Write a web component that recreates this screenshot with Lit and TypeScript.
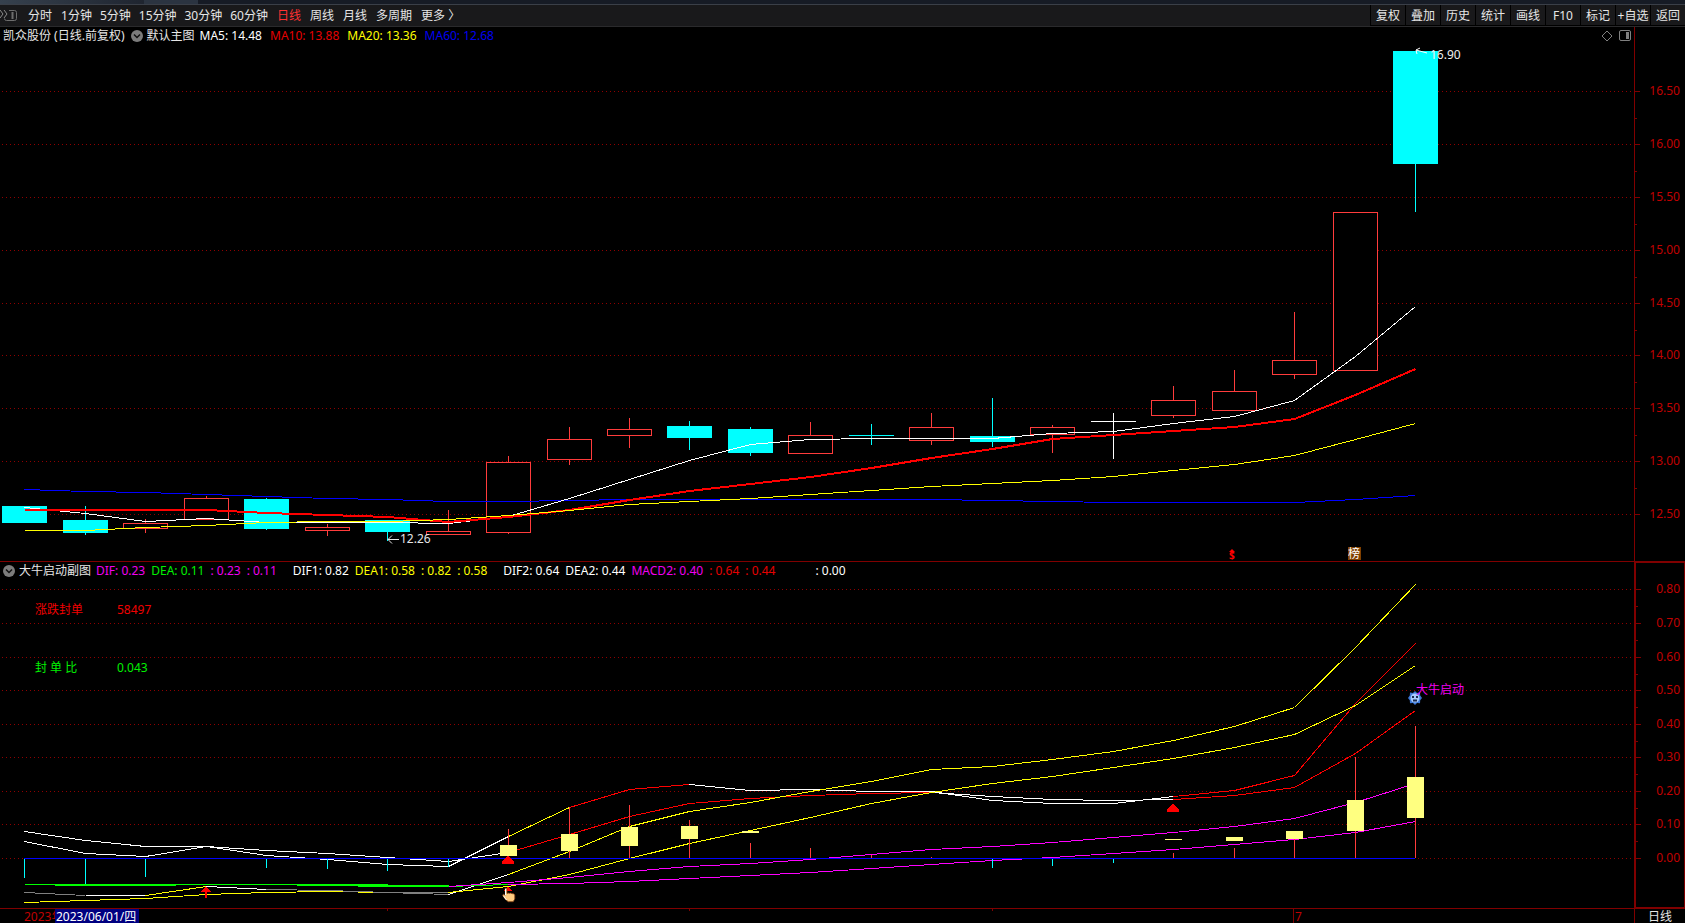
import { LitElement, html, svg, css } from "lit";
import { customElement, state } from "lit/decorators.js";

type Run = { color: string; from: number; y: number[]; w?: number };
type Candle = { kind: "up" | "down" | "flat"; o: number; c: number; hi: number; lo: number };
type Size = { w: number; h: number };

const WHITE = "#ffffff";
const YELLOW = "#ffff00";
const RED = "#ff0000";
const MAGENTA = "#ff00ff";
const BLUE = "#0000ff";
const GRAY = "#808080";
const CYAN = "#00ffff";
const CANDLE_RED = "#ff3c3c";

/* Vertical extents of the drawing areas, in chart rows. */
const PRICE = { top: 45, height: 516 };
const PRICE_AXIS = { top: 27, height: 534 };
const INDICATOR = { top: 580, height: 328 };
const INDICATOR_AXIS = { top: 562, height: 346 };
const ZERO = 858;

const candles: Candle[] = [
  ["down", 506, 523, 506, 523], ["down", 520, 533, 506, 535], ["up", 523, 528, 519, 533],
  ["up", 498, 519, 496, 519], ["down", 499, 529, 498, 530], ["up", 527, 530, 524, 536],
  ["down", 520, 532, 520, 541], ["up", 531, 534, 510, 534], ["up", 462, 532, 456, 534],
  ["up", 439, 459, 427, 465], ["up", 429, 435, 418, 448], ["down", 426, 438, 421, 450],
  ["down", 429, 453, 427, 456], ["up", 435, 453, 422, 453], ["down", 435, 436, 424, 445],
  ["up", 427, 440, 413, 445], ["down", 436, 442, 398, 447], ["up", 427, 434, 425, 453],
  ["flat", 421, 422, 413, 459], ["up", 400, 415, 386, 418], ["up", 391, 410, 370, 410],
  ["up", 360, 374, 312, 379], ["up", 212, 370, 212, 370], ["down", 51, 164, 51, 212],
].map(([kind, o, c, hi, lo]) => ({ kind, o, c, hi, lo }) as Candle);

const priceRuns: Run[] = [
  { color: BLUE, from: 0, y: [489, 491, 492, 494, 496, 498, 499, 501, 501, 500, 499, 499, 499, 499, 499, 499, 500, 501, 502, 502, 502, 502, 499, 495] },
  { color: WHITE, from: 0, y: [507, 513, 521, 518, 522, 522, 522, 523, 516, 498, 479, 460, 444, 439, 438, 438, 438, 433, 431, 423, 416, 400, 356, 306] },
  { color: RED, w: 2, from: 0, y: [510, 510, 510, 510, 513, 515, 517, 522, 517, 510, 500, 491, 484, 477, 468, 458, 449, 439, 435, 431, 427, 419, 395, 369] },
  { color: YELLOW, from: 0, y: [530, 530, 527, 525, 522, 521, 521, 519, 515, 510, 504, 501, 498, 494, 490, 486, 483, 480, 476, 470, 464, 455, 439, 423] },
];

const indicatorRuns: Run[] = [
  { color: WHITE, from: 0, y: [831, 840, 846, 846, 850, 853, 857, 861, 852] },
  { color: RED, from: 8, y: [852, 834, 816, 803, 798, 795, 793, 792] },
  { color: WHITE, from: 15, y: [792, 796, 799, 800, 799] },
  { color: RED, from: 19, y: [799, 795, 787, 753, 710] },
  { color: WHITE, from: 0, y: [841, 853, 856, 846, 855, 859, 864, 866, 836] },
  { color: YELLOW, from: 8, y: [836, 807] },
  { color: RED, from: 9, y: [807, 789, 784] },
  { color: WHITE, from: 11, y: [784, 790, 789, 791, 791, 800, 803, 803, 796] },
  { color: RED, from: 19, y: [796, 790, 775, 703, 643] },
  { color: GRAY, from: 0, y: [892, 895] },
  { color: WHITE, from: 1, y: [895, 895] },
  { color: YELLOW, from: 2, y: [895, 886] },
  { color: WHITE, from: 3, y: [886, 889] },
  { color: YELLOW, from: 0, y: [902, 900, 898, 894, 892, 891, 892] },
  { color: GRAY, from: 4, y: [889, 890, 892, 894] },
  { color: GRAY, from: 6, y: [892, 892] },
  { color: WHITE, from: 7, y: [894, 874] },
  { color: YELLOW, from: 8, y: [874, 851, 826, 811, 802, 791, 781, 769, 766, 759, 751, 740, 726, 707, 647, 584] },
  { color: YELLOW, from: 7, y: [892, 886, 874, 858, 843, 830, 817, 803, 792, 783, 776, 767, 758, 747, 734, 705, 665] },
  { color: "#00ff00", from: 0, y: [884, 884, 884, 884, 884, 885, 886, 886, 884] },
  { color: MAGENTA, from: 7, y: [886, 882, 877, 871, 866, 863, 859, 854, 849, 846, 842, 837, 832, 826, 818, 802, 783] },
  { color: MAGENTA, from: 8, y: [884, 883, 881, 878, 875, 872, 868, 864, 860, 857, 853, 849, 844, 839, 832, 821] },
  { color: "#00ff00", w: 2, from: 0.5, y: [885, 885, 885] },
  { color: "#00ff00", w: 2, from: 4.5, y: [885, 885, 886] },
  { color: "#00ff00", w: 2, from: 6, y: [886, 886] },
];

/* slot → row where the bar ends */
const bars: [number, number][] = [
  [0, 878], [1, 884], [2, 877], [4, 868], [5, 869], [6, 871], [7, 867], [16, 868], [17, 866], [18, 863],
  [8, 829], [9, 807], [10, 805], [11, 820], [12, 843], [13, 848], [14, 855], [15, 857], [19, 853],
  [20, 848], [21, 839], [22, 757], [23, 726],
];

/* slot, top row, bottom row */
const blocks: [number, number, number][] = [
  [8, 845, 856], [9, 834, 851], [10, 827, 846], [11, 826, 839], [12, 831, 833],
  [19, 839, 840], [20, 837, 841], [21, 831, 839], [22, 800, 831], [23, 777, 818],
];

const priceTicks: [string, number][] = [
  ["16.50", 91], ["16.00", 144], ["15.50", 197], ["15.00", 250], ["14.50", 303],
  ["14.00", 355], ["13.50", 408], ["13.00", 461], ["12.50", 514],
];
const indicatorTicks: [string, number][] = [
  ["0.80", 589], ["0.70", 623], ["0.60", 657], ["0.50", 690], ["0.40", 724],
  ["0.30", 757], ["0.20", 791], ["0.10", 824], ["0.00", 858],
];

const minutes = ["1分钟", "5分钟", "15分钟", "30分钟", "60分钟"];
const periods = ["日线", "周线", "月线", "多周期"];
const tools = ["复权", "叠加", "历史", "统计", "画线", "F10", "标记", "+自选", "返回"];

@customElement("app-root")
export class AppRoot extends LitElement {
  static styles = css`
    :host {
      display: flex;
      flex-direction: column;
      height: 100vh;
      background: #000;
      color: #e6e6e6;
      font: 12px/18px "Noto Sans", "Noto Sans CJK SC", sans-serif;
      overflow: hidden;
    }
    .strip {
      flex: none;
      height: 4px;
      background: linear-gradient(90deg, #36414e 0, #1f2530 144px, #2b3441 144px, #2b3441 198px, #161b25 198px);
    }
    .toolbar {
      flex: none;
      display: flex;
      box-sizing: border-box;
      height: 23px;
      border-top: 1px solid #3a3f48;
      border-bottom: 1px solid #2a2a2c;
      background: #19191b;
    }
    .toolbar button {
      margin: 0;
      padding: 0;
      border: 0;
      background: none;
      color: inherit;
      font: inherit;
      line-height: 20px;
      white-space: nowrap;
    }
    .dock { flex: none; width: 18px; height: 21px; }
    .left { flex: 1; display: flex; gap: 9px; padding: 0 10px; overflow: hidden; }
    .group { display: flex; gap: 9px; }
    .group.tight { gap: 8px; }
    .toolbar button.active { color: #ff3232; }
    .right { display: flex; }
    .toolbar .right button {
      width: 35px;
      border-left: 1px solid #000;
      box-shadow: inset 0 -1px #000;
    }
    .panel { display: flex; min-height: 0; }
    .price { flex: 534 1 0; }
    .indicator { flex: 346 1 0; border-top: 1px solid #800000; }
    .main {
      flex: 1;
      min-width: 0;
      display: flex;
      flex-direction: column;
      box-sizing: border-box;
    }
    .legend {
      flex: none;
      display: flex;
      align-items: center;
      height: 18px;
      gap: 5px;
      padding-left: 3px;
      white-space: pre;
    }
    .values { display: flex; gap: 8px; }
    .sub .values { gap: 6px; }
    .title { display: flex; align-items: center; gap: 4px; }
    .title .name { padding-right: 2px; }
    .fold { display: flex; margin: 0; padding: 0; border: 0; background: none; }
    .marks { display: flex; gap: 6px; margin-left: auto; padding-right: 3px; }
    .gap { padding-left: 10px; }
    .widegap { padding-left: 34px; }
    .white { color: #fff; }
    .yellow { color: #ff0; }
    .red { color: #e60000; }
    .blue { color: #0000f0; }
    .green { color: #00f000; }
    .magenta { color: #f000f0; }
    .plot { flex: 1; min-height: 0; overflow: hidden; }
    svg { display: block; }
    .axis {
      flex: none;
      width: 51px;
      box-sizing: border-box;
      border-left: 1px solid #800000;
      overflow: hidden;
    }
    .axis.framed {
      border: 1px solid #800000;
      border-left-width: 2px;
    }
    .footer {
      flex: none;
      display: flex;
      box-sizing: border-box;
      height: 15px;
      border-top: 1px solid #800000;
      line-height: 15px;
    }
    .dates { flex: 1; min-width: 0; overflow: hidden; }
    .period {
      box-sizing: border-box;
      width: 51px;
      border-left: 1px solid #800000;
      padding-left: 13px;
    }
    text { font-size: 12px; white-space: pre; }
    .crisp { shape-rendering: crispEdges; }
    .tick { fill: #c00000; text-anchor: end; }
    .badge { font-size: 10px; font-weight: 700; }
  `;

  @state() private priceSize: Size = { w: 1634, h: 516 };
  @state() private indicatorSize: Size = { w: 1634, h: 328 };

  private observer?: ResizeObserver;

  firstUpdated() {
    this.observer = new ResizeObserver(() => this.measure());
    this.renderRoot.querySelectorAll(".plot").forEach((el) => this.observer!.observe(el));
    this.measure();
  }

  disconnectedCallback() {
    this.observer?.disconnect();
    super.disconnectedCallback();
  }

  private measure() {
    const read = (sel: string): Size => {
      const el = this.renderRoot.querySelector(sel) as HTMLElement;
      return { w: el.clientWidth, h: el.clientHeight };
    };
    const p = read(".price .plot");
    const i = read(".indicator .plot");
    if (p.w !== this.priceSize.w || p.h !== this.priceSize.h) this.priceSize = p;
    if (i.w !== this.indicatorSize.w || i.h !== this.indicatorSize.h) this.indicatorSize = i;
  }

  private x(i: number) {
    return Math.round(24.2 + (i * (this.priceSize.w - 1)) / 27);
  }

  private scale(area: { top: number; height: number }, h: number) {
    return (row: number) => Math.round(((row - area.top) * h) / area.height);
  }

  private drawRun(run: Run, y: (n: number) => number) {
    const off = run.w === 2 ? 0 : 0.5;
    const pts = run.y.map((v, k) => `${this.x(run.from + k) + 0.5},${y(v) + off}`).join(" ");
    return svg`<polyline points=${pts} fill="none" stroke=${run.color} stroke-width=${run.w ?? 1} />`;
  }

  private drawGrid(rows: [string, number][], y: (n: number) => number, w: number) {
    return rows.map(([, r]) => svg`<line x1="2" x2=${w - 2} y1=${y(r) + 0.5} y2=${y(r) + 0.5}
      stroke="#900000" stroke-dasharray="1 3" />`);
  }

  private drawCandle(c: Candle, i: number, y: (n: number) => number) {
    const x = this.x(i);
    const color = c.kind === "up" ? CANDLE_RED : c.kind === "down" ? CYAN : WHITE;
    const wick = svg`<path d="M${x + 0.5} ${y(c.hi)}V${y(c.lo)}" stroke=${color} />`;
    const body = c.kind === "up"
      ? svg`<rect x=${x - 21.5} y=${y(c.o) + 0.5} width="44" height=${y(c.c) - y(c.o)} fill="#000" stroke=${color} />`
      : svg`<rect x=${x - 22} y=${y(c.o)} width="45" height=${y(c.c) - y(c.o)} fill=${color} />`;
    return svg`${wick}${body}`;
  }

  private renderPrice() {
    const { w, h } = this.priceSize;
    const y = this.scale(PRICE, h);
    const low = this.x(6), last = this.x(23), dollar = this.x(20), board = this.x(22);
    return html`<svg width=${w} height=${h} role="img" aria-label="日线">
      <g class="crisp">
        ${this.drawGrid(priceTicks, y, w)}
        ${candles.map((c, i) => this.drawCandle(c, i, y))}
        ${priceRuns.map((r) => this.drawRun(r, y))}
      </g>
      <path d="M${low + 12} ${y(539) + 0.5}H${low + 1}m4 -4l-4 4l4 4" fill="none" stroke="#e6e6e6" />
      <text x=${low + 13} y=${y(543)} fill="#e6e6e6">12.26</text>
      <path d="M${last + 12} ${y(53)}L${last + 1} ${y(50)}m4 -2l-4 2l1 4" fill="none" stroke="#ffffff" />
      <text x=${last + 15} y=${y(59)} fill="#f0f0f0">16.90</text>
      <path d="M${dollar - 5} ${y(552)}l3 -3l3 3z" fill="#ff0000" />
      <text class="badge" x=${dollar - 5} y=${y(559)} fill="#ff0000">$</text>
      <rect x=${board - 7} y=${y(547)} width="13" height="13" fill="#804000" />
      <text x=${board - 7} y=${y(558)} fill="#ffffff">榜</text>
    </svg>`;
  }

  private renderIndicator() {
    const { w, h } = this.indicatorSize;
    const y = this.scale(INDICATOR, h);
    const s = this.x(3), hand = this.x(8), gear = this.x(23);
    const triangle = (i: number, top: number) =>
      svg`<path d="M${this.x(i)} ${y(top)}l6 7v2h-12v-2z" fill="#ff0000" />`;
    return html`<svg width=${w} height=${h} role="img" aria-label="大牛启动副图">
      <g class="crisp">
        ${this.drawGrid(indicatorTicks, y, w)}
        ${indicatorRuns.map((r) => this.drawRun(r, y))}
        ${bars.map(([i, end]) => svg`<path d="M${this.x(i) + 0.5} ${y(ZERO)}V${y(end)}"
          stroke=${end > ZERO ? CYAN : CANDLE_RED} />`)}
        ${blocks.map(([i, a, b]) => svg`<rect x=${this.x(i) - 8} y=${y(a)} width="17" height=${y(b) - y(a)} fill="#ffff80" />`)}
        <path d="M${this.x(0)} ${y(ZERO) + 0.5}H${gear}" stroke="#0000ff" />
        ${triangle(8, 855)}${triangle(19, 803)}
        <path d="M${s} ${y(886)}l5 6h-4v6h-2v-6h-4z" fill="#ff0000" />
        <path d="M${hand} ${y(886)}l4 5h-8z" fill="#ff0000" />
      </g>
      <g transform="translate(${hand - 6} ${y(887)})">
        <path d="M3 1.500c1-1 2 0 2 1v4l1-.6 1.400.4 1.200-.2 1.400.5 1.500.2 1.300 1v4.200l-1.600 2.700h-5l-3-2.500-2.700-4 1-1 2 1.300z"
          fill="#ffcc80" stroke="#7a3c10" stroke-width=".8" />
        <path d="M3.500 2v6.500M1.500 9l3 4" stroke="#fff" fill="none" />
      </g>
      <g transform="translate(${gear} ${y(698)})">
        <path d="M0-7l2 2 3-.5.200 3L7 0 5.200 2.300 5 5.300 2 5 0 7-2 5-5 5.300-5.200 2.300-7 0-5.200-2.500-5-5.500-2-5z" fill="#3c78d8" />
        <circle r="4.500" fill="#a8ccff" />
        <path d="M-3-2h2v2h-2zM1-2h2v2h-2zM-2 1.500h4v2h-4z" fill="#1c2c50" />
      </g>
      <text x=${gear + 1} y=${y(694)} fill="#f000f0">大牛启动</text>
      <text x="35" y=${y(614)} fill="#f00000">涨跌封单</text>
      <text x="117" y=${y(614)} fill="#f00000">58497</text>
      <text x="35" y=${y(672)} fill="#00f000">封 单 比</text>
      <text x="117" y=${y(672)} fill="#00f000">0.043</text>
    </svg>`;
  }

  private renderAxis(ticks: [string, number][], area: { top: number; height: number }, h: number, inset: number) {
    const y = this.scale(area, h);
    const half = (ticks[1][1] - ticks[0][1]) / 2;
    return html`<svg width="48" height=${h}>
      ${ticks.map(([label, r], i) => svg`
        <path class="crisp" d="M0 ${y(r) - inset + 0.5}h5${i < ticks.length - 1 ? `M0 ${y(r + half) - inset + 0.5}h2` : ""}" stroke="#800000" />
        <text class="tick" x=${45 - inset} y=${y(r + 4) - inset}>${label}</text>`)}
    </svg>`;
  }

  private fold(label: string) {
    return html`<button class="fold" aria-label=${label}><svg width="12" height="12" viewBox="0 0 12 12">
      <circle cx="6" cy="6" r="6" fill="#7c7c7c" />
      <path d="M3 4.500l3 3 3-3" fill="none" stroke="#111" stroke-width="1.500" />
    </svg></button>`;
  }

  render() {
    const week = this.x(21);
    const ph = this.priceSize.h + 18;
    const ih = this.indicatorSize.h + 18;
    return html`
      <div class="strip"></div>
      <nav class="toolbar">
        <svg class="dock" viewBox="0 0 18 21" fill="none" stroke="#8c8c8c">
          <path d="M0 5l3 4-3 4M4 5l3 4-3 4" />
          <path d="M9 5.500h5.500q2 0 2 2v6q0 2-2 2h-8q-2 0-2-2" stroke="#6e6e6e" />
          <path d="M12.500 7v7" stroke="#6e6e6e" stroke-width="2" />
        </svg>
        <div class="left">
          <div class="group"><button>分时</button></div>
          <div class="group tight">${minutes.map((m) => html`<button>${m}</button>`)}</div>
          <div class="group">${periods.map((p, i) => html`<button class=${i === 0 ? "active" : ""}>${p}</button>`)}</div>
          <button>更多 〉</button>
        </div>
        <div class="right">${tools.map((t) => html`<button>${t}</button>`)}</div>
      </nav>
      <section class="panel price">
        <div class="main">
          <div class="legend">
            <span class="title"><span class="name">凯众股份 (日线.前复权)</span>${this.fold("主图指标")}<span>默认主图</span></span>
            <span class="values">
              <span class="white">MA5: 14.48</span>
              <span class="red">MA10: 13.88</span>
              <span class="yellow">MA20: 13.36</span>
              <span class="blue">MA60: 12.68</span>
            </span>
            <span class="marks">
              <svg width="12" height="12" fill="none" stroke="#808080"><path d="M6 1l5 5-5 5-5-5z" /></svg>
              <svg width="12" height="12"><rect x=".5" y=".5" width="11" height="10" rx="1.500" fill="none" stroke="#808080" /><path d="M7 2h3v7h-3z" fill="#808080" /></svg>
            </span>
          </div>
          <div class="plot">${this.renderPrice()}</div>
        </div>
        <div class="axis">${this.renderAxis(priceTicks, PRICE_AXIS, ph, 0)}</div>
      </section>
      <section class="panel indicator">
        <div class="main">
          <div class="legend sub">
            <span class="title">${this.fold("副图指标")}<span>大牛启动副图</span></span>
            <span class="values">
              <span class="magenta">DIF: 0.23</span>
              <span class="green">DEA: 0.11</span>
              <span class="magenta">: 0.23</span>
              <span class="magenta">: 0.11</span>
              <span class="white gap">DIF1: 0.82</span>
              <span class="yellow">DEA1: 0.58</span>
              <span class="yellow">: 0.82</span>
              <span class="yellow">: 0.58</span>
              <span class="white gap">DIF2: 0.64</span>
              <span class="white">DEA2: 0.44</span>
              <span class="magenta">MACD2: 0.40</span>
              <span class="red">: 0.64</span>
              <span class="red">: 0.44</span>
              <span class="white widegap">: 0.00</span>
            </span>
          </div>
          <div class="plot">${this.renderIndicator()}</div>
        </div>
        <div class="axis framed">${this.renderAxis(indicatorTicks, INDICATOR_AXIS, ih, 1)}</div>
      </section>
      <footer class="footer">
        <div class="dates">
          <svg width="100%" height="14">
            ${[6, 11, 16].map((i) => svg`<path d="M${this.x(i) + 0.5} 0v2" stroke="#800000" />`)}
            <path d="M${week - 0.5} 0v14" stroke="#800000" />
            <text x=${week + 1} y="12" fill="#c00000">7</text>
            <text x="24" y="12" fill="#c00000">2023年</text>
            <rect x="55" y="0" width="84" height="14" fill="#000080" />
            <text x="56" y="12" fill="#ffffff">2023/06/01/四</text>
          </svg>
        </div>
        <div class="period">日线</div>
      </footer>
    `;
  }
}
